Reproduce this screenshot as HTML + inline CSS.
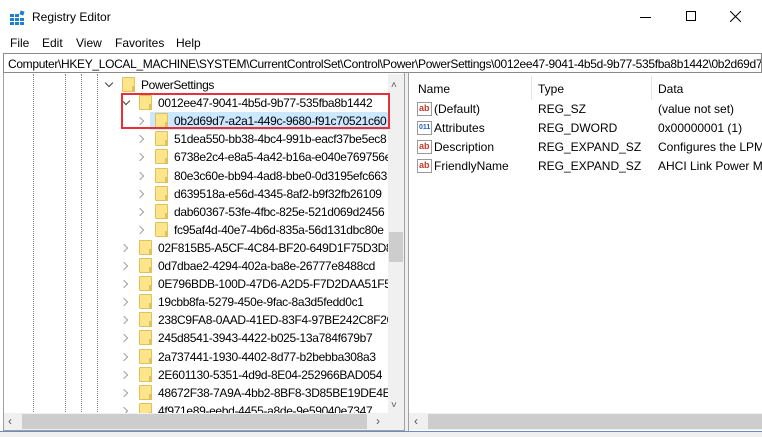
<!DOCTYPE html>
<html><head><style>
*{margin:0;padding:0;box-sizing:border-box}
body{width:762px;height:437px;background:#fff;font-family:"Liberation Sans",sans-serif;font-size:12px;color:#000;position:relative;overflow:hidden}
.a{position:absolute;white-space:nowrap}
.t{letter-spacing:-0.33px}
.fold{position:absolute;width:13px;height:15px;background:#fde58c;border:1px solid #e3c15a;border-radius:1px}
.fold:after{content:"";position:absolute;right:-1px;bottom:-1px;width:3px;height:6px;background:#e3c15a}
.chev{position:absolute;width:6px;height:6px;border-right:1.5px solid #a0a0a0;border-bottom:1.5px solid #a0a0a0}
.chev.d{border-color:#404040}
.dot{position:absolute;top:74px;height:340px;border-left:1px dotted #888}
.ab{position:absolute;width:15px;height:14px;border:1px solid #999;background:#fff;font-size:9px;font-weight:bold;color:#c0392b;line-height:11px;padding-left:1px}
</style></head><body>
<svg class="a" style="left:10px;top:10px" width="16" height="16"><g fill="#1e7fd0"><rect x="0" y="4" width="4" height="3"/><rect x="5" y="4" width="4" height="3"/><rect x="0" y="8" width="4" height="3"/><rect x="5" y="8" width="4" height="3"/><rect x="10" y="8" width="4" height="3"/><rect x="0" y="12" width="4" height="3"/><rect x="5" y="12" width="4" height="3"/><rect x="10" y="12" width="4" height="3"/><rect x="10" y="1" width="4" height="4" transform="rotate(20 12 3)"/></g></svg>
<div class="a" style="left:32px;top:10px;font-size:12px">Registry Editor</div>
<div class="a" style="left:640px;top:17px;width:11px;height:1px;background:#000"></div>
<div class="a" style="left:686px;top:11px;width:10px;height:10px;border:1px solid #000"></div>
<svg class="a" style="left:730px;top:11px" width="11" height="11"><path d="M0 0L11 11M11 0L0 11" stroke="#000" stroke-width="1"/></svg>
<div class="a" style="top:36px;left:10px">File</div>
<div class="a" style="top:36px;left:42px">Edit</div>
<div class="a" style="top:36px;left:76px">View</div>
<div class="a" style="top:36px;left:115px">Favorites</div>
<div class="a" style="top:36px;left:176px">Help</div>
<div class="a t" style="left:3px;top:53px;width:759px;height:20px;border:1px solid #8a8a8a;padding:3px 0 0 4px;overflow:hidden;font-size:12px">Computer\HKEY_LOCAL_MACHINE\SYSTEM\CurrentControlSet\Control\Power\PowerSettings\0012ee47-9041-4b5d-9b77-535fba8b1442\0b2d69d7</div>
<div class="a" style="left:3px;top:73px;width:402px;height:358px;border:1px solid #a0a0a0;border-top:none"></div>
<div class="dot" style="left:33px"></div><div class="dot" style="left:65px"></div><div class="dot" style="left:81px"></div><div class="dot" style="left:97px"></div>
<div class="a" style="left:150px;top:112px;width:238px;height:18px;background:#cce8ff"></div>
<div id="tree"></div>
<div class="a" style="left:388px;top:74px;width:16px;height:339px;background:#f0f0f0"></div>
<div class="a" style="left:389px;top:232px;width:14px;height:30px;background:#cdcdcd"></div>
<div class="a" style="left:391px;top:80px;font-size:10px;color:#555">&#x2C4;</div>
<div class="a" style="left:391px;top:400px;font-size:10px;color:#555">&#x2C5;</div>
<div class="a" style="left:4px;top:413px;width:400px;height:17px;background:#f0f0f0"></div>
<div class="a" style="left:22px;top:414px;width:345px;height:15px;background:#cdcdcd"></div>
<div class="a" style="left:8px;top:414px;color:#555">&lsaquo;</div>
<div class="a" style="left:376px;top:414px;color:#555">&rsaquo;</div>
<div class="a" style="left:405px;top:73px;width:3px;height:358px;background:#f0f0f0"></div>
<div class="a" style="left:408px;top:73px;width:354px;height:358px;border-left:1px solid #a0a0a0"></div>
<div class="a" style="left:531px;top:76px;width:1px;height:24px;background:#e5e5e5"></div>
<div class="a" style="left:651px;top:76px;width:1px;height:24px;background:#e5e5e5"></div>
<div class="a" style="left:418px;top:82px">Name</div>
<div class="a" style="left:538px;top:82px">Type</div>
<div class="a" style="left:658px;top:82px">Data</div>
<div class="ab" style="left:417px;top:102px">ab</div><div class="a" style="left:434px;top:102px">(Default)</div><div class="a" style="left:538px;top:102px">REG_SZ</div><div class="a" style="left:658px;top:102px">(value not set)</div>
<div class="ab" style="left:417px;top:121px;color:#1e5fc0;font-size:7px">011</div><div class="a" style="left:434px;top:121px">Attributes</div><div class="a" style="left:538px;top:121px">REG_DWORD</div><div class="a" style="left:658px;top:121px">0x00000001 (1)</div>
<div class="ab" style="left:417px;top:140px">ab</div><div class="a" style="left:434px;top:140px">Description</div><div class="a" style="left:538px;top:140px">REG_EXPAND_SZ</div><div class="a" style="left:658px;top:140px">Configures the LPM</div>
<div class="ab" style="left:417px;top:159px">ab</div><div class="a" style="left:434px;top:159px">FriendlyName</div><div class="a" style="left:538px;top:159px">REG_EXPAND_SZ</div><div class="a" style="left:658px;top:159px">AHCI Link Power M</div>
<div class="a" style="left:409px;top:413px;width:353px;height:17px;background:#f0f0f0"></div>
<div class="a" style="left:428px;top:414px;width:334px;height:15px;background:#cdcdcd"></div>
<div class="a" style="left:414px;top:414px;color:#555">&lsaquo;</div>
<div class="a" style="left:0;top:431px;width:762px;height:6px;background:#f0f0f0;border-top:1px solid #6a8fbf"></div>
<div class="a" style="left:121px;top:93px;width:269px;height:36px;border:2px solid #e8303a"></div>
<script>
var rows=[[0,"PowerSettings",1],[1,"0012ee47-9041-4b5d-9b77-535fba8b1442",1],[2,"0b2d69d7-a2a1-449c-9680-f91c70521c60"],[2,"51dea550-bb38-4bc4-991b-eacf37be5ec8"],[2,"6738e2c4-e8a5-4a42-b16a-e040e769756e"],[2,"80e3c60e-bb94-4ad8-bbe0-0d3195efc663"],[2,"d639518a-e56d-4345-8af2-b9f32fb26109"],[2,"dab60367-53fe-4fbc-825e-521d069d2456"],[2,"fc95af4d-40e7-4b6d-835a-56d131dbc80e"],[1,"02F815B5-A5CF-4C84-BF20-649D1F75D3D8"],[1,"0d7dbae2-4294-402a-ba8e-26777e8488cd"],[1,"0E796BDB-100D-47D6-A2D5-F7D2DAA51F51"],[1,"19cbb8fa-5279-450e-9fac-8a3d5fedd0c1"],[1,"238C9FA8-0AAD-41ED-83F4-97BE242C8F20"],[1,"245d8541-3943-4422-b025-13a784f679b7"],[1,"2a737441-1930-4402-8d77-b2bebba308a3"],[1,"2E601130-5351-4d9d-8E04-252966BAD054"],[1,"48672F38-7A9A-4bb2-8BF8-3D85BE19DE4E"],[1,"4f971e89-eebd-4455-a8de-9e59040e7347"]];
var h="";rows.forEach(function(r,i){var y=76+i*18.1;var fx=[122,139,155][r[0]];var ax=fx-17;
if(r[2])h+='<div class="chev d" style="left:'+(ax+1)+'px;top:'+(y+4)+'px;transform:rotate(45deg)"></div>';else h+='<div class="chev" style="left:'+(ax-1)+'px;top:'+(y+6)+'px;transform:rotate(-45deg)"></div>';
h+='<div class="fold" style="left:'+fx+'px;top:'+(y+1)+'px"></div><div class="a t" style="left:'+(fx+19)+'px;top:'+(y+2)+'px;width:'+(388-fx-19)+'px;overflow:hidden">'+r[1]+'</div>';});
document.getElementById("tree").innerHTML=h;
</script>
</body></html>
